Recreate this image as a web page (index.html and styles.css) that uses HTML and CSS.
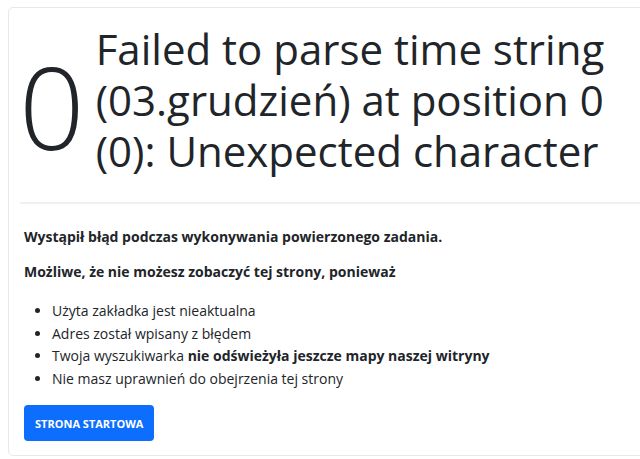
FILE: index.html
```html
<!DOCTYPE html>
<html lang="pl">
<head>
<meta charset="utf-8">
<title>Błąd</title>
<link rel="stylesheet" href="styles.css">
</head>
<body>
<div class="card">
  <div class="card-header">
    <div class="code">0</div>
    <h1 class="message">Failed to parse time string (03.grudzień) at position 0 (0): Unexpected character</h1>
  </div>
  <hr class="divider">
  <div class="card-body">
    <p class="lead-text">Wystąpił błąd podczas wykonywania powierzonego zadania.</p>
    <p class="lead-text lead-last">Możliwe, że nie możesz zobaczyć tej strony, ponieważ</p>
    <ul class="reasons">
      <li>Użyta zakładka jest nieaktualna</li>
      <li>Adres został wpisany z błędem</li>
      <li>Twoja wyszukiwarka <strong>nie odświeżyła jeszcze mapy naszej witryny</strong></li>
      <li>Nie masz uprawnień do obejrzenia tej strony</li>
    </ul>
    <a class="btn-home" href="#">STRONA STARTOWA</a>
  </div>
</div>
</body>
</html>
```
FILE: styles.css
```css
html, body {
  margin: 0;
  padding: 0;
  background: #fff;
}
body {
  padding: 7px 0 0 8px;
  font-family: "Open Sans", "Noto Sans", sans-serif;
  color: #212529;
  overflow: hidden;
}
.card {
  width: 660px;
  height: 449px;
  box-sizing: border-box;
  border: 1px solid #e6e8ea;
  border-radius: 5px;
  display: flex;
  flex-direction: column;
}
.card-header {
  display: flex;
  align-items: flex-start;
  gap: 11px;
  padding: 15px 16px 0 10px;
}
.code {
  margin-top: 25px;
  font-size: 115px;
  font-weight: 300;
  line-height: 1;
  color: #212529;
}
.message {
  margin: 0;
  width: 540px;
  font-size: 42px;
  font-weight: 400;
  line-height: 51px;
}
.divider {
  margin: 26px 0 0 11px;
  border: 0;
  border-top: 2px solid #eef0f2;
}
.card-body {
  padding: 23px 15px 0 15px;
  font-size: 14px;
}
.lead-text {
  margin: 0 0 16px;
  font-weight: 700;
}
.lead-last {
  margin-bottom: 19px;
}
.reasons {
  margin: 0 0 14px;
  padding-left: 28px;
  line-height: 22.7px;
}
.btn-home {
  display: inline-block;
  background: #0d6efd;
  color: #fff;
  text-decoration: none;
  font-weight: 700;
  font-size: 11px;
  padding: 11px 11px 10px;
  border-radius: 4px;
}
```
